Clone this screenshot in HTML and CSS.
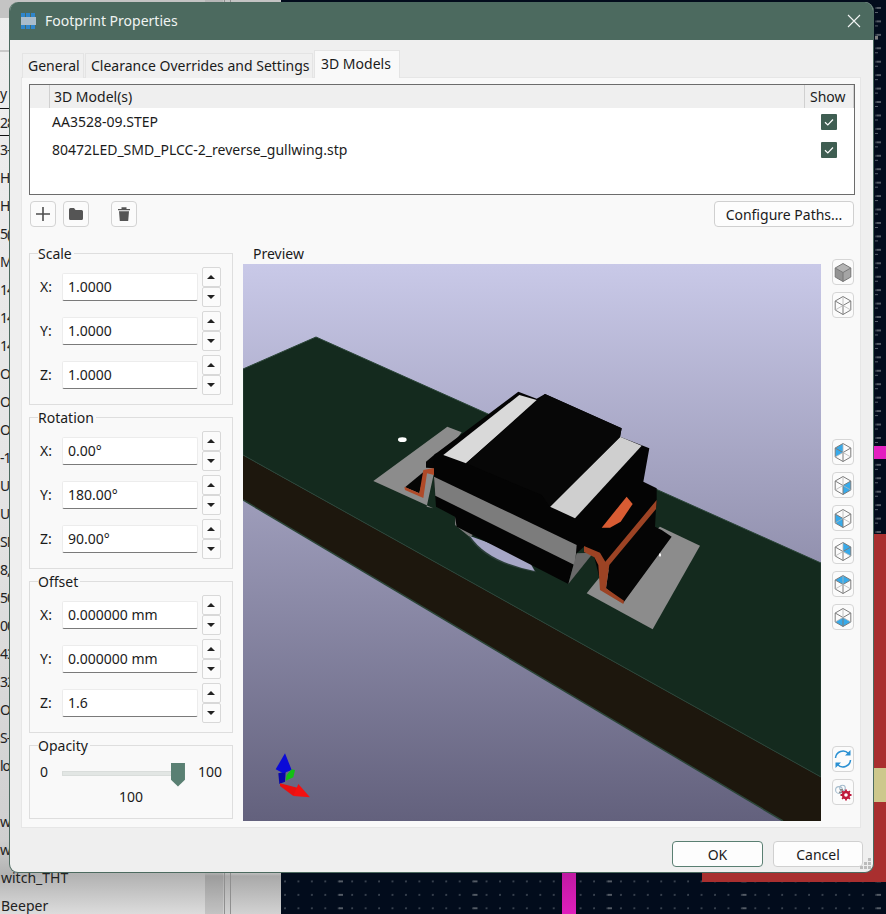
FILE: index.html
```html
<!DOCTYPE html>
<html lang="en">
<head>
<meta charset="utf-8">
<title>Footprint Properties</title>
<link rel="stylesheet" href="styles.css">
</head>
<body>
<svg class="defs" width="0" height="0" aria-hidden="true">
  <defs>
    <symbol id="wire" viewBox="0 0 22 26">
      <g fill="none" stroke="#7d7d7d" stroke-width="1">
        <path d="M11 4.500 18.800 9V18L11 22.500 3.200 18V9Z"/>
        <path d="M3.200 9 11 13.500 18.800 9M11 13.500V22.500"/>
      </g>
      <g fill="none" stroke="#b5b5b5" stroke-width=".8">
        <path d="M11 4.500V13.500M3.200 18 11 13.500 18.800 18"/>
      </g>
    </symbol>
  </defs>
</svg>

<div class="desktop">
  <aside class="tree">
    <div class="tree-top"></div>
    <div class="tree-search"></div>
    <ul class="tree-list">
      <li>y</li><li class="tree-sel">28</li><li>3-</li><li>HE</li><li>HE</li><li>5(</li><li>M-</li><li>14</li><li>14</li><li>14</li>
      <li>O</li><li>O</li><li>O</li><li>-1</li><li>US</li><li>US</li><li>SM</li><li>8,</li><li>50</li><li>00</li><li>43</li><li>32</li>
      <li>OS</li><li>S-</li><li>lo</li><li></li><li>w</li><li>w</li>
      <li class="tree-full">witch_THT</li><li class="tree-full">Beeper</li>
    </ul>
  </aside>
  <div class="sash"><span class="sash-band"></span><span class="sash-line"></span><span class="sash-line"></span></div>
  <div class="pcb">
    <span class="pcb-ticks"></span>
    <span class="pcb-red"></span>
    <span class="pcb-redside"></span>
    <span class="pcb-yellow"></span>
    <span class="pcb-magenta-side"></span>
    <span class="pcb-magenta"></span>
  </div>
</div>

<section class="dialog">
  <header class="titlebar">
    <svg class="app-icon" width="16" height="16" viewBox="0 0 16 16" aria-hidden="true">
      <rect x="0" y="4" width="15" height="8" fill="#a9bccb"/>
      <path d="M0 0h4v4H0zM5 0h4v4H5zM10 0h4v4h-4zM0 12h4v4H0zM5 12h4v4H5zM10 12h4v4h-4z" fill="#2f86cc"/>
    </svg>
    <span class="title-text">Footprint Properties</span>
    <svg class="close" width="14" height="14" viewBox="0 0 14 14" aria-hidden="true"><path d="M1 1 13 13M13 1 1 13" stroke="#f2f5f4" stroke-width="1.100"/></svg>
  </header>

  <nav class="tabs">
    <span class="tab tab-general">General</span>
    <span class="tab tab-wide">Clearance Overrides and Settings</span>
    <span class="tab tab-active">3D Models</span>
  </nav>

  <div class="panel">
    <div class="grid">
      <div class="grid-head">
        <span class="head-corner"></span>
        <span class="head-name">3D Model(s)</span>
        <span class="head-show">Show</span>
      </div>
      <div class="grid-row">
        <span>AA3528-09.STEP</span>
        <span class="check"><svg width="16" height="16" viewBox="0 0 16 16"><path d="M4 8.300 6.800 11 12 5.500" fill="none" stroke="#fff" stroke-width="1.200"/></svg></span>
      </div>
      <div class="grid-row">
        <span>80472LED_SMD_PLCC-2_reverse_gullwing.stp</span>
        <span class="check"><svg width="16" height="16" viewBox="0 0 16 16"><path d="M4 8.300 6.800 11 12 5.500" fill="none" stroke="#fff" stroke-width="1.200"/></svg></span>
      </div>
    </div>

    <div class="toolbar">
      <button class="icon-btn"><svg width="16" height="16" viewBox="0 0 16 16"><path d="M8 1V15M1 8H15" stroke="#4d4d4d" stroke-width="1.600"/></svg></button>
      <button class="icon-btn"><svg width="16" height="14" viewBox="0 0 16 14"><path d="M1 2.500Q1 1 2.500 1H6L7.500 3H13.500Q15 3 15 4.500V11.500Q15 13 13.500 13H2.500Q1 13 1 11.500Z" fill="#555"/></svg></button>
      <button class="icon-btn icon-btn-gap"><svg width="14" height="16" viewBox="0 0 14 16"><path d="M1 3H13V4.300H1ZM4.500 3V1.300H9.500V3ZM2 5.300H12L11.200 15H2.800Z" fill="#555"/></svg></button>
      <button class="text-btn paths-btn">Configure Paths...</button>
    </div>

    <div class="workspace">
      <div class="controls">
        <fieldset class="group">
          <legend>Scale</legend>
          <div class="field-row"><label>X:</label><span class="input">1.0000</span><span class="spin"><button class="up"></button><button class="down"></button></span></div>
          <div class="field-row"><label>Y:</label><span class="input">1.0000</span><span class="spin"><button class="up"></button><button class="down"></button></span></div>
          <div class="field-row"><label>Z:</label><span class="input">1.0000</span><span class="spin"><button class="up"></button><button class="down"></button></span></div>
        </fieldset>
        <fieldset class="group">
          <legend>Rotation</legend>
          <div class="field-row"><label>X:</label><span class="input">0.00°</span><span class="spin"><button class="up"></button><button class="down"></button></span></div>
          <div class="field-row"><label>Y:</label><span class="input">180.00°</span><span class="spin"><button class="up"></button><button class="down"></button></span></div>
          <div class="field-row"><label>Z:</label><span class="input">90.00°</span><span class="spin"><button class="up"></button><button class="down"></button></span></div>
        </fieldset>
        <fieldset class="group">
          <legend>Offset</legend>
          <div class="field-row"><label>X:</label><span class="input">0.000000 mm</span><span class="spin"><button class="up"></button><button class="down"></button></span></div>
          <div class="field-row"><label>Y:</label><span class="input">0.000000 mm</span><span class="spin"><button class="up"></button><button class="down"></button></span></div>
          <div class="field-row"><label>Z:</label><span class="input">1.6</span><span class="spin"><button class="up"></button><button class="down"></button></span></div>
        </fieldset>
        <fieldset class="group group-opacity">
          <legend>Opacity</legend>
          <div class="slider-row">
            <span class="slider-min">0</span>
            <span class="slider"><span class="thumb"></span></span>
            <span>100</span>
          </div>
          <div class="slider-value">100</div>
        </fieldset>
      </div>

      <div class="preview">
        <div class="preview-label">Preview</div>
        <svg class="scene" width="578" height="557" viewBox="243 264 578 557" aria-label="3D preview">
          <defs>
            <linearGradient id="sky" x1="0" y1="0" x2="0" y2="1">
              <stop offset="0" stop-color="#c9c9e8"/>
              <stop offset="1" stop-color="#63617d"/>
            </linearGradient>
            <linearGradient id="band" gradientUnits="userSpaceOnUse" x1="436" y1="322" x2="410" y2="378">
              <stop offset="0" stop-color="#bcbcbc"/>
              <stop offset=".55" stop-color="#a4a4a4"/>
              <stop offset="1" stop-color="#7c7c7c"/>
            </linearGradient>
          </defs>
          <rect x="243" y="264" width="578" height="557" fill="url(#sky)"/>
          <polygon points="243,455 821,777 821,821 783,821 243,500" fill="#1d170d"/>
          <polygon points="243,369 316,337 821,563 821,777 243,455" fill="#142a1e" stroke="#2b4538" stroke-width="1"/>
          <path d="M243 500 783 821" stroke="#2b4538" stroke-width="1.500" fill="none"/>
          <g transform="translate(360 380) scale(.33333)">
            <ellipse cx="127" cy="179" rx="13" ry="7" fill="#fff"/>
            <polygon points="262,140 305,157 225,265 200,380 220,385 40,303" fill="#8c8c8c"/>
            <polygon points="680,640 720,590 900,440 1020,497 878,748" fill="#8c8c8c"/>
            <polygon points="285,405 285,435 330,472 342,462" fill="#7a7a7a"/>
            <path d="M325 468Q375 550 528 577L500 530Z" fill="#2c3f3a"/>
            <path d="M330 468Q382 545 524 573L500 530Z" fill="#a6a6c6"/>
            <polygon points="135,322 195,272 178,340" fill="#050505"/>
            <polygon points="133,320 178,340 190,270 225,263 222,285 201,280 190,354 135,330" fill="#b04a28"/>
            <polygon points="198,245 230,218 226,265 198,263" fill="#050505"/>
            <polygon points="222,225 475,35 530,56 555,42 785,145 780,170 868,205 850,305 890,325 890,365 888,387 748,555 720,600 700,520 672,500 650,520 625,612 290,440 285,410 228,380 222,290" fill="#040404"/>
            <polygon points="250,225 478,45 530,60 318,250" fill="#d9d9d9"/>
            <polygon points="570,380 780,170 845,197 645,415" fill="#cfcfcf"/>
            <polygon points="318,250 555,42 785,145 780,172 570,380 545,345" fill="#070707"/>
            <polygon points="222,290 650,495 645,556 226,347" fill="url(#band)"/>
            <polygon points="650,520 700,518 625,612" fill="#696969"/>
            <polygon points="725,443 800,350 818,372 782,425 750,443" fill="#d85c33"/>
            <polygon points="748,555 888,387 885,440 905,450 935,470 790,668 738,625" fill="#050505"/>
            <polygon points="672,498 720,518 736,545 890,360 888,387 748,555 738,625 792,662 790,672 720,630 715,555 703,532 672,516" fill="#9c4324"/>
            <ellipse cx="900" cy="525" rx="3" ry="5" fill="#fff"/>
          </g>
          <g transform="translate(240 720) scale(.33333)">
            <polygon points="115,160 137,155 135,185 118,192" fill="#0808a8"/>
            <polygon points="135,100 155,150 130,160 107,148" fill="#0a0ad8"/>
            <polygon points="155,148 165,150 160,172 137,182 140,165" fill="#12c012"/>
            <polygon points="120,190 178,205 160,228 120,198" fill="#e81010"/>
            <polygon points="175,192 210,232 160,228" fill="#f41010"/>
          </g>
        </svg>
      </div>

      <div class="rail">
        <div class="rail-group">
          <button class="view-btn"><svg width="22" height="26" viewBox="0 0 22 26"><polygon points="11,4.500 18.800,9 11,13.500 3.200,9" fill="#b4b4b4"/><polygon points="3.200,9 11,13.500 11,22.500 3.200,18" fill="#939393"/><polygon points="18.800,9 11,13.500 11,22.500 18.800,18" fill="#a5a5a5"/><path d="M11 4.500 18.800 9V18L11 22.500 3.200 18V9ZM3.200 9 11 13.500 18.800 9M11 13.500V22.500" fill="none" stroke="#777"/></svg></button>
          <button class="view-btn"><svg width="22" height="26"><use href="#wire"/></svg></button>
        </div>
        <div class="rail-group rail-views">
          <button class="view-btn"><svg width="22" height="26" viewBox="0 0 22 26"><polygon points="3.200,9 11,4.500 11,13.500 3.200,18" fill="#37aaea"/><use href="#wire" width="22" height="26"/></svg></button>
          <button class="view-btn"><svg width="22" height="26" viewBox="0 0 22 26"><polygon points="18.800,9 11,13.500 11,22.500 18.800,18" fill="#37aaea"/><use href="#wire" width="22" height="26"/></svg></button>
          <button class="view-btn"><svg width="22" height="26" viewBox="0 0 22 26"><polygon points="3.200,9 11,13.500 11,22.500 3.200,18" fill="#37aaea"/><use href="#wire" width="22" height="26"/></svg></button>
          <button class="view-btn"><svg width="22" height="26" viewBox="0 0 22 26"><polygon points="11,4.500 18.800,9 18.800,18 11,13.500" fill="#37aaea"/><use href="#wire" width="22" height="26"/></svg></button>
          <button class="view-btn"><svg width="22" height="26" viewBox="0 0 22 26"><polygon points="11,4.500 18.800,9 11,13.500 3.200,9" fill="#37aaea"/><use href="#wire" width="22" height="26"/></svg></button>
          <button class="view-btn"><svg width="22" height="26" viewBox="0 0 22 26"><polygon points="3.200,18 11,13.500 18.800,18 11,22.500" fill="#37aaea"/><use href="#wire" width="22" height="26"/></svg></button>
        </div>
        <div class="rail-group rail-tools">
          <button class="view-btn"><svg width="22" height="26" viewBox="0 0 22 26"><path d="M3.500 12A7.500 7.500 0 0 1 16.500 7.500M18.500 14A7.500 7.500 0 0 1 5.500 18.500" fill="none" stroke="#2b90d2" stroke-width="1.500"/><path d="M18.500 4V9.500H13ZM3.500 22V16.500H9Z" fill="#2b90d2"/></svg></button>
          <button class="view-btn"><svg width="22" height="26" viewBox="0 0 22 26"><g fill="none" stroke="#a5bccd" stroke-width="1.100"><circle cx="7" cy="11" r="3.400"/><circle cx="10.500" cy="9" r="2.800"/></g><path d="M8 10h3v1.500H8zM7 12.500h3V14H7z" fill="#8a8a8a"/><path d="M14 10.500v2M14 19.500v2M8.500 16h2M17.500 16h2M10.100 12.100l1.500 1.500M16.400 18.400l1.500 1.500M17.900 12.100l-1.500 1.500M11.600 18.400l-1.500 1.500" stroke="#bf1a3d" stroke-width="1.800"/><circle cx="14" cy="16" r="3" fill="#fff" stroke="#bf1a3d" stroke-width="2.400"/></svg></button>
        </div>
      </div>
    </div>
  </div>

  <footer class="actions">
    <button class="text-btn ok-btn">OK</button>
    <button class="text-btn cancel-btn">Cancel</button>
  </footer>
  <svg class="grip" width="13" height="13" viewBox="0 0 13 13" aria-hidden="true"><path d="M9 0h3v3H9zM5 4h3v3H5zM9 4h3v3H9zM1 8h3v3H1zM5 8h3v3H5zM9 8h3v3H9z" fill="#bcbcbc"/></svg>
</section>
</body>
</html>
```

FILE: styles.css
```css
* { box-sizing: border-box; }
html, body { margin: 0; height: 100%; overflow: hidden; }
body {
  width: 886px;
  height: 914px;
  position: relative;
  font: 14px/20px "Noto Sans", "Open Sans", sans-serif;
  color: #1b1b1b;
}
button { font: inherit; color: inherit; margin: 0; padding: 0; }
.defs { position: absolute; }

/* Desktop behind the dialog */
.desktop { display: flex; width: 886px; height: 914px; }
.tree {
  width: 205px;
  overflow: hidden;
  background: linear-gradient(180deg, #efefef 0, #e4e4e4 500px, #cfcfcf 840px, #b2b2b2 875px, #dcdcdc 914px);
}
.tree-top { height: 18px; background: #c4c4c4; }
.tree-search { height: 34px; border-bottom: 2px solid #c9c9c9; }
.tree-list { list-style: none; margin: 28px 0 0; padding: 0; }
.tree-list li { height: 28px; line-height: 28px; white-space: nowrap; color: #222; letter-spacing: -1px; }
.tree-list .tree-full { padding-left: 1px; letter-spacing: 0; }
.tree-sel { border-top: 1px solid #111; border-bottom: 1px solid #111; }
.sash {
  width: 76px;
  display: flex;
  background: linear-gradient(180deg, #c4c4c4 0, #c0c0c0 873px, #a9a9a9 876px, #d2d2d2 914px);
}
.sash-band { width: 18px; background: rgba(0,0,0,.07); }
.sash-line { width: 5px; border-left: 1px solid #8f8f8f; margin-left: 1px; }
.pcb {
  flex: 1;
  position: relative;
  background-color: #020c1c;
  background-image:
    radial-gradient(ellipse 2px 1px at 2px 1px, #555c66 99%, transparent),
    radial-gradient(circle at 1px 1px, #3a4350 .7px, transparent .9px);
  background-size: 134.500px 13.450px, 13.450px 13.450px;
  background-position: 58px 7px, 3px 7px;
}
.pcb-ticks {
  position: absolute;
  left: 594px;
  top: 0;
  width: 3px;
  height: 534px;
  background-image:
    linear-gradient(#7f7f7f, #7f7f7f),
    linear-gradient(#58606b 1px, transparent 1px);
  background-size: 3px 3px, 3px 13.450px;
  background-position: 0 36px, 0 12px;
  background-repeat: no-repeat, repeat-y;
}
.pcb-red { position: absolute; left: 421px; top: 860px; width: 184px; height: 22px; background: #a92f2f; }
.pcb-redside { position: absolute; left: 593px; top: 534px; width: 12px; height: 348px; background: #a92f2f; }
.pcb-yellow { position: absolute; left: 593px; top: 768px; width: 12px; height: 34px; background: #cdc88c; }
.pcb-magenta-side { position: absolute; left: 593px; top: 446px; width: 12px; height: 13px; background: #e31fc0; }
.pcb-magenta { position: absolute; left: 281px; top: 860px; width: 14px; height: 54px; background: linear-gradient(180deg, #b5189a, #e01fbd); }

/* Dialog window */
.dialog {
  position: absolute;
  left: 9px;
  top: 2px;
  width: 865px;
  height: 871px;
  background: #efefef;
  border: 1px solid #4c6a5f;
  border-top: 0;
  border-radius: 9px;
  overflow: hidden;
}
.titlebar {
  height: 38px;
  background: #4c6a5f;
  color: #f0f4f2;
  display: flex;
  align-items: center;
  padding: 0 13px 0 12px;
  margin: 0 -1px;
}
.app-icon { flex: none; margin-right: 8px; }
.title-text { flex: 1; }
.close { flex: none; }

/* Tabs */
.tabs { display: flex; align-items: flex-end; height: 38px; margin: 0 0 -1px 12px; }
.tab {
  height: 25px;
  padding: 0 0 0 5px;
  margin-right: 1px;
  line-height: 23px;
  background: #f0f0f0;
  border: 1px solid #e4e4e4;
  border-bottom: 0;
  white-space: nowrap;
}
.tab-general { width: 62px; }
.tab-wide { width: 228px; }
.tab-active { position: relative; z-index: 1; width: 86px; height: 28px; line-height: 26px; padding-left: 6px; background: #f9f9f9; margin: 0; }

/* Main panel */
.panel {
  height: 751px;
  margin: 0 12px 0 11px;
  padding: 6px 5px 6px 7px;
  background: #f9f9f9;
  border: 1px solid #e6e6e6;
}
.grid { height: 111px; border: 1px solid #6c6c6c; background: #fff; }
.grid-head { display: flex; height: 23px; line-height: 24px; background: #efefef; }
.head-corner { width: 20px; border-right: 1px solid #d0d0d0; }
.head-name { flex: 1; padding-left: 4px; }
.head-show { width: 50px; padding-left: 5px; border-left: 1px solid #d0d0d0; border-right: 1px solid #d0d0d0; }
.grid-row { display: flex; justify-content: space-between; align-items: center; height: 28px; padding: 0 17px 0 22px; }
.check { display: block; width: 16px; height: 16px; border-radius: 1px; background: #3f5e52; }
.check svg { display: block; }

.toolbar { display: flex; gap: 7px; margin: 6px 1px 0 1px; height: 26px; }
.icon-btn {
  width: 26px;
  height: 26px;
  background: #fbfbfb;
  border: 1px solid #d3d3d3;
  border-radius: 4px;
  display: flex;
  align-items: center;
  justify-content: center;
}
.icon-btn-gap { margin-left: 15px; }
.text-btn { background: #fdfdfd; border: 1px solid #d0d0d0; border-radius: 4px; height: 26px; padding-top: 2px; }
.paths-btn { width: 140px; margin-left: auto; }

.workspace { display: flex; margin-top: 16px; height: 578px; }
.controls { width: 204px; flex: none; display: flex; flex-direction: column; gap: 2px; }

/* Group boxes */
.group { margin: 0; padding: 4px 10px 9px 10px; min-width: 0; border: 1px solid #dedede; }
.group legend { padding: 0 2px 0 0; margin-left: -2px; height: 20px; line-height: 22px; }
.field-row { display: flex; align-items: center; height: 40px; margin-bottom: 4px; }
.field-row:last-child { margin-bottom: 0; }
.field-row label { width: 22px; }
.input {
  display: block;
  width: 136px;
  height: 28px;
  line-height: 25px;
  padding-left: 5px;
  background: #fff;
  border: 1px solid #ececec;
  border-bottom: 1px solid #7a7a7a;
  border-radius: 2px;
}
.spin { display: flex; flex-direction: column; margin-left: 4px; }
.spin button {
  position: relative;
  width: 19px;
  height: 20px;
  background: #fbfbfb;
  border: 1px solid #d8d8d8;
  border-radius: 2px;
}
.spin button::before {
  content: "";
  position: absolute;
  left: 4px;
  top: 7px;
  border-left: 4px solid transparent;
  border-right: 4px solid transparent;
}
.spin .up::before { border-bottom: 4px solid #222; }
.spin .down::before { border-top: 4px solid #222; }

.group-opacity { padding-top: 0; padding-bottom: 0; height: 84px; }
.slider-row { display: flex; align-items: center; height: 26px; margin-top: 4px; }
.slider-min { width: 22px; }
.slider { position: relative; display: block; width: 123px; height: 5px; margin: 2px 14px 0 0; background: #e2e6e4; border: 1px solid #d9dddb; }
.thumb {
  position: absolute;
  right: -2px;
  top: -9px;
  width: 14px;
  height: 24px;
  background: #5a8073;
  clip-path: polygon(0 0, 100% 0, 100% 72%, 50% 100%, 0 72%);
}
.slider-value { text-align: center; margin-top: 2px; }

/* Preview */
.preview { width: 578px; flex: none; margin-left: 10px; }
.preview-label { height: 21px; line-height: 22px; padding-left: 10px; }
.scene { display: block; }

.rail { width: 22px; margin-left: 11px; padding-top: 16px; display: flex; flex-direction: column; }
.rail-group { display: flex; flex-direction: column; gap: 7px; }
.rail-views { margin-top: 121px; }
.rail-tools { margin-top: 116px; }
.view-btn { width: 22px; height: 26px; background: #fbfbfb; border: 1px solid #d6d6d6; border-radius: 4px; position: relative; }
.view-btn svg { display: block; position: absolute; left: -1px; top: -1px; }

/* Footer */
.actions { display: flex; justify-content: flex-end; gap: 10px; margin: 13px 10px 0 0; }
.ok-btn { width: 91px; border: 1.500px solid #5a7f72; }
.cancel-btn { width: 90px; }
.grip { position: absolute; right: 1px; bottom: 1px; }
```
